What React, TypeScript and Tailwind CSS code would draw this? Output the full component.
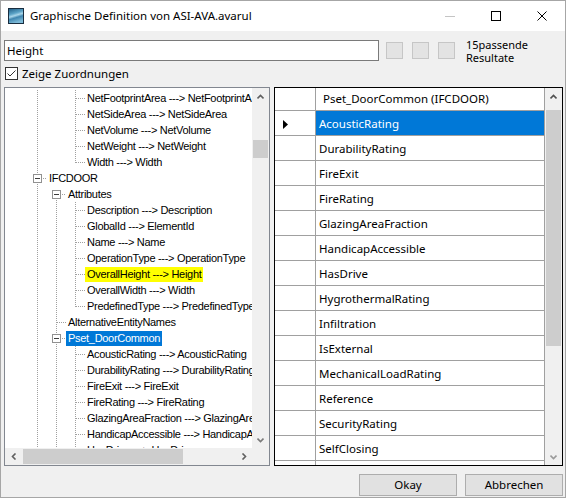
import React from "react";

type Cell = "v" | "n" | "t" | "l" | "E" | "Eb";

interface TreeRow {
  cells: Cell[];
  label: string;
  mark?: "yellow" | "blue";
}

const DOT = "#a0a0a0";

const treeRows: TreeRow[] = [
  { cells: ["v", "n", "t"], label: "NetFootprintArea ---> NetFootprintArea" },
  { cells: ["v", "n", "t"], label: "NetSideArea ---> NetSideArea" },
  { cells: ["v", "n", "t"], label: "NetVolume ---> NetVolume" },
  { cells: ["v", "n", "t"], label: "NetWeight ---> NetWeight" },
  { cells: ["v", "n", "l"], label: "Width ---> Width" },
  { cells: ["E"], label: "IFCDOOR" },
  { cells: ["v", "Eb"], label: "Attributes" },
  { cells: ["v", "v", "t"], label: "Description ---> Description" },
  { cells: ["v", "v", "t"], label: "GlobalId ---> ElementId" },
  { cells: ["v", "v", "t"], label: "Name ---> Name" },
  { cells: ["v", "v", "t"], label: "OperationType ---> OperationType" },
  { cells: ["v", "v", "t"], label: "OverallHeight ---> Height", mark: "yellow" },
  { cells: ["v", "v", "t"], label: "OverallWidth ---> Width" },
  { cells: ["v", "v", "l"], label: "PredefinedType ---> PredefinedType" },
  { cells: ["v", "t"], label: "AlternativeEntityNames" },
  { cells: ["v", "E"], label: "Pset_DoorCommon", mark: "blue" },
  { cells: ["v", "v", "t"], label: "AcousticRating ---> AcousticRating" },
  { cells: ["v", "v", "t"], label: "DurabilityRating ---> DurabilityRating" },
  { cells: ["v", "v", "t"], label: "FireExit ---> FireExit" },
  { cells: ["v", "v", "t"], label: "FireRating ---> FireRating" },
  { cells: ["v", "v", "t"], label: "GlazingAreaFraction ---> GlazingAreaFraction" },
  { cells: ["v", "v", "t"], label: "HandicapAccessible ---> HandicapAccessible" },
  { cells: ["v", "v", "t"], label: "HasDrive ---> HasDrive" },
];

const gridRows = [
  "AcousticRating",
  "DurabilityRating",
  "FireExit",
  "FireRating",
  "GlazingAreaFraction",
  "HandicapAccessible",
  "HasDrive",
  "HygrothermalRating",
  "Infiltration",
  "IsExternal",
  "MechanicalLoadRating",
  "Reference",
  "SecurityRating",
  "SelfClosing",
  "",
];

function TreeCell({ kind }: { kind: Cell }) {
  const full = kind === "v" || kind === "t";
  return (
    <svg width="19" height="16" className="block shrink-0">
      {full && <line x1="9.5" y1="0" x2="9.5" y2="16" stroke={DOT} strokeDasharray="1 1" />}
      {kind === "l" && <line x1="9.5" y1="0" x2="9.5" y2="9" stroke={DOT} strokeDasharray="1 1" />}
      {(kind === "t" || kind === "l") && (
        <line x1="10" y1="8.5" x2="19" y2="8.5" stroke={DOT} strokeDasharray="1 1" />
      )}
      {(kind === "E" || kind === "Eb") && (
        <>
          {kind === "E" && <line x1="9.5" y1="0" x2="9.5" y2="4" stroke={DOT} strokeDasharray="1 1" />}
          <line x1="9.5" y1="14" x2="9.5" y2="16" stroke={DOT} strokeDasharray="1 1" />
          <line x1="15" y1="8.5" x2="19" y2="8.5" stroke={DOT} strokeDasharray="1 1" />
          <rect x="5.5" y="4.5" width="8" height="8" fill="#fff" stroke="#919191" />
          <line x1="7" y1="8.5" x2="12" y2="8.5" stroke="#3c3c3c" />
        </>
      )}
    </svg>
  );
}

function Chevron({ dir, color = "#606060" }: { dir: "up" | "down" | "left" | "right"; color?: string }) {
  const pts = {
    up: "0.5,4.5 3.5,1.5 6.5,4.5",
    down: "0.5,1.5 3.5,4.5 6.5,1.5",
    left: "4.5,0.5 1.5,3.5 4.5,6.5",
    right: "1.5,0.5 4.5,3.5 1.5,6.5",
  }[dir];
  const vertical = dir === "up" || dir === "down";
  return (
    <svg width={vertical ? 7 : 6} height={vertical ? 6 : 7} className="block">
      <polyline points={pts} fill="none" stroke={color} strokeWidth="1.6" />
    </svg>
  );
}

function WindowIcon() {
  return (
    <svg width="16" height="16" className="block shrink-0">
      <defs>
        <linearGradient id="ic" x1="0" y1="0" x2="0.3" y2="1">
          <stop offset="0" stopColor="#1d5a82" />
          <stop offset="0.4" stopColor="#5aa2c6" />
          <stop offset="0.55" stopColor="#a9d6ea" />
          <stop offset="0.7" stopColor="#3f86b0" />
          <stop offset="1" stopColor="#7dbad8" />
        </linearGradient>
      </defs>
      <rect x="0.5" y="0.5" width="15" height="15" fill="url(#ic)" stroke="#1a2e40" />
    </svg>
  );
}

function TitleBar() {
  return (
    <div className="h-[30px] bg-white flex items-center shrink-0">
      <div className="ml-[7px]">
        <WindowIcon />
      </div>
      <span className="ml-[6px] text-[11.5px] text-black whitespace-nowrap">
        Graphische Definition von ASI-AVA.avarul
      </span>
      <div className="ml-auto flex h-full">
        <div className="w-[46px] flex items-center justify-center">
          <div className="w-[10px] h-px bg-[#c4c4c4]" />
        </div>
        <div className="w-[46px] flex items-center justify-center">
          <div className="w-[10px] h-[10px] border border-black" />
        </div>
        <div className="w-[46px] flex items-center justify-center">
          <svg width="10" height="10" className="block">
            <path d="M0.5 0.5 L9.5 9.5 M9.5 0.5 L0.5 9.5" stroke="#000" strokeWidth="1" />
          </svg>
        </div>
      </div>
    </div>
  );
}

function Tree() {
  return (
    <div className="w-[266px] h-full border border-[#828790] flex flex-col bg-white">
      <div className="flex h-[360px]">
        <div className="flex-1 overflow-hidden pt-[2px] font-['Liberation_Sans',Arial,sans-serif] text-[11px] tracking-[-0.3px]">
          <div className="pl-[23px]">
            {treeRows.map((r, i) => (
              <div key={i} className="flex items-center h-[16px]">
                {r.cells.map((c, j) => (
                  <TreeCell key={j} kind={c} />
                ))}
                <span
                  className={
                    "px-[2px] h-[15px] leading-[15px] whitespace-nowrap " +
                    (r.mark === "yellow"
                      ? "bg-[#ffff00] text-black"
                      : r.mark === "blue"
                        ? "bg-[#0078d7] text-white"
                        : "text-black")
                  }
                >
                  {r.label}
                </span>
              </div>
            ))}
          </div>
        </div>
        <div className="w-[17px] bg-[#f0f0f0] flex flex-col">
          <div className="h-[17px] flex items-center justify-center">
            <Chevron dir="up" />
          </div>
          <div className="flex-1 px-[1px]">
            <div className="mt-[35px] h-[18px] bg-[#cdcdcd]" />
          </div>
          <div className="h-[17px] flex items-center justify-center">
            <Chevron dir="down" color="#7a7a7a" />
          </div>
        </div>
      </div>
      <div className="flex h-[17px] bg-[#f0f0f0]">
        <div className="w-[17px] flex items-center justify-center">
          <Chevron dir="left" />
        </div>
        <div className="flex-1 flex items-center">
          <div className="ml-[1px] w-[160px] h-[15px] bg-[#cdcdcd]" />
        </div>
        <div className="w-[17px] flex items-center justify-center">
          <Chevron dir="right" />
        </div>
        <div className="w-[17px]" />
      </div>
    </div>
  );
}

function Grid() {
  return (
    <div className="w-[289px] h-full border border-black flex bg-white text-[11.5px]">
      <div className="flex-1 flex flex-col overflow-hidden">
        <div className="flex h-[23px] shrink-0 border-b border-[#a0a0a0]">
          <div className="w-[41px] border-r border-[#a0a0a0]" />
          <div className="w-[229px] border-r border-[#a0a0a0] pl-[7px] flex items-center whitespace-nowrap">
            Pset_DoorCommon (IFCDOOR)
          </div>
        </div>
        {gridRows.map((name, i) => (
          <div key={i} className="flex h-[25px] shrink-0 border-b border-[#a0a0a0]">
            <div className="w-[41px] border-r border-[#a0a0a0] flex items-center pl-[8px] pt-[2px]">
              {i === 0 && (
                <svg width="5" height="9" className="block">
                  <polygon points="0,0 5,4.5 0,9" fill="#000" />
                </svg>
              )}
            </div>
            <div
              className={
                "w-[229px] border-r border-[#a0a0a0] pl-[3px] pt-[1px] flex items-center whitespace-nowrap " +
                (i === 0 ? "bg-[#0078d7] text-white" : "text-black")
              }
            >
              {name}
            </div>
          </div>
        ))}
      </div>
      <div className="w-[17px] bg-[#f0f0f0] flex flex-col">
        <div className="h-[17px] flex items-center justify-center">
          <Chevron dir="up" color="#505050" />
        </div>
        <div className="flex-1 px-[1px]">
          <div className="mt-[5px] h-[236px] bg-[#cdcdcd]" />
        </div>
        <div className="h-[17px] flex items-center justify-center">
          <Chevron dir="down" color="#9a9a9a" />
        </div>
      </div>
    </div>
  );
}

export default function App() {
  return (
    <div className="w-[567px] h-[500px] bg-white font-['Noto_Sans',sans-serif] text-black">
      <div className="w-[566px] h-[498px] border border-[#a6a6a6] bg-[#f0f0f0] flex flex-col">
        <TitleBar />
        <div className="flex-1 flex flex-col pl-[3px] pr-[2px]">
          <div className="mt-[9px] h-[21px] flex items-center">
            <div className="w-[375px] h-full border border-[#7a7a7a] bg-white flex items-center pl-[2px] text-[11.5px]">
              Height
            </div>
            <div className="ml-[7px] flex gap-[9px]">
              <div className="w-[17px] h-[17px] border border-[#c6c6c6] bg-[#e3e3e3]" />
              <div className="w-[17px] h-[17px] border border-[#c6c6c6] bg-[#e3e3e3]" />
              <div className="w-[17px] h-[17px] border border-[#c6c6c6] bg-[#e3e3e3]" />
            </div>
            <div className="ml-[11px] text-[11px] leading-[13px]">
              <div>15passende</div>
              <div>Resultate</div>
            </div>
          </div>
          <div className="mt-[6px] h-[13px] flex items-center">
            <div className="ml-[1px] w-[13px] h-[13px] border border-[#333] bg-white flex items-center justify-center">
              <svg width="11" height="11" className="block">
                <polyline points="1.5,5.5 4,8 9.5,2.5" fill="none" stroke="#333" strokeWidth="1" />
              </svg>
            </div>
            <span className="ml-[4px] text-[11.5px]">Zeige Zuordnungen</span>
          </div>
          <div className="mt-[7px] h-[379px] flex gap-[4px]">
            <Tree />
            <Grid />
          </div>
          <div className="mt-[8px] flex justify-end gap-[8px]">
            <button className="w-[98px] h-[22px] border border-[#adadad] bg-[#e1e1e1] text-[11.5px]">
              Okay
            </button>
            <button className="w-[98px] h-[22px] border border-[#adadad] bg-[#e1e1e1] text-[11.5px]">
              Abbrechen
            </button>
          </div>
        </div>
      </div>
    </div>
  );
}
